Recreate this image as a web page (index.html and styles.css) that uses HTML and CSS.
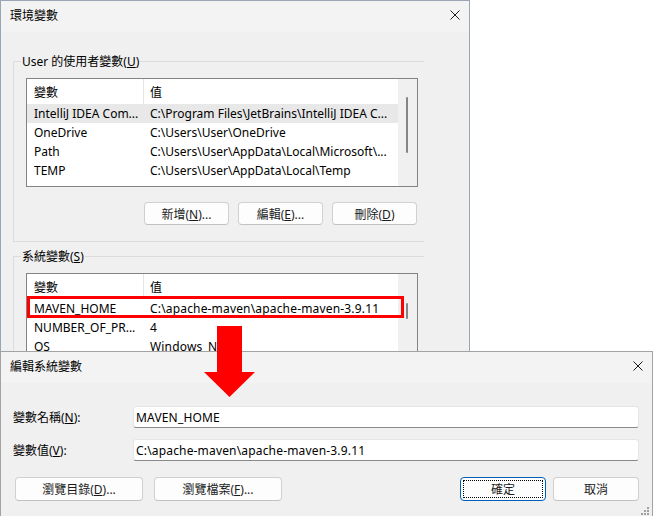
FILE: index.html
```html
<!DOCTYPE html>
<html lang="zh-Hant">
<head>
<meta charset="utf-8">
<title>環境變數</title>
<link rel="stylesheet" href="styles.css">
</head>
<body>
<main class="desk">
  <section class="win env">
    <header class="titlebar">
      <span class="title">環境變數</span>
      <svg class="close" width="10" height="10" viewBox="0 0 10 10"><path d="M0.5 0.5L9.5 9.5M9.5 0.5L0.5 9.5" stroke="#1b1b1b" stroke-width="1"/></svg>
    </header>
    <div class="env-body">
      <div class="group">
        <div class="group-title">User 的使用者變數(<u>U</u>)</div>
        <div class="listview lv-user">
          <div class="lv-main">
            <div class="lv-head"><span class="c1">變數</span><span class="c2">值</span></div>
            <div class="lv-row sel"><span class="c1">IntelliJ IDEA Com...</span><span class="c2">C:\Program Files\JetBrains\IntelliJ IDEA C...</span></div>
            <div class="lv-row"><span class="c1">OneDrive</span><span class="c2">C:\Users\User\OneDrive</span></div>
            <div class="lv-row"><span class="c1">Path</span><span class="c2">C:\Users\User\AppData\Local\Microsoft\...</span></div>
            <div class="lv-row"><span class="c1">TEMP</span><span class="c2">C:\Users\User\AppData\Local\Temp</span></div>
          </div>
          <div class="lv-scroll"><div class="thumb"></div></div>
        </div>
        <div class="btn-row">
          <button class="btn">新增(<u>N</u>)...</button>
          <button class="btn">編輯(<u>E</u>)...</button>
          <button class="btn">刪除(<u>D</u>)</button>
        </div>
      </div>
      <div class="group sys">
        <div class="group-title">系統變數(<u>S</u>)</div>
        <div class="listview lv-sys">
          <div class="lv-main">
            <div class="lv-head"><span class="c1">變數</span><span class="c2">值</span></div>
            <div class="lv-row"><span class="c1">MAVEN_HOME</span><span class="c2">C:\apache-maven\apache-maven-3.9.11</span></div>
            <div class="lv-row"><span class="c1">NUMBER_OF_PR...</span><span class="c2">4</span></div>
            <div class="lv-row"><span class="c1">OS</span><span class="c2">Windows_NT</span></div>
          </div>
          <div class="lv-scroll"><div class="thumb"></div></div>
          <div class="mark"></div>
        </div>
      </div>
    </div>
  </section>

  <section class="win edit">
    <header class="titlebar">
      <span class="title">編輯系統變數</span>
      <svg class="close" width="10" height="10" viewBox="0 0 10 10"><path d="M0.5 0.5L9.5 9.5M9.5 0.5L0.5 9.5" stroke="#1b1b1b" stroke-width="1"/></svg>
    </header>
    <div class="edit-body">
      <div class="field">
        <label class="field-label">變數名稱(<u>N</u>):</label>
        <div class="input">MAVEN_HOME</div>
      </div>
      <div class="field">
        <label class="field-label">變數值(<u>V</u>):</label>
        <div class="input">C:\apache-maven\apache-maven-3.9.11</div>
      </div>
      <div class="dlg-buttons">
        <div class="btn-group">
          <button class="btn wide">瀏覽目錄(<u>D</u>)...</button>
          <button class="btn wide">瀏覽檔案(<u>F</u>)...</button>
        </div>
        <div class="btn-group right">
          <button class="btn default">確定</button>
          <button class="btn">取消</button>
        </div>
      </div>
    </div>
    <svg class="grip" width="9" height="9" viewBox="0 0 9 9">
      <rect x="6" y="0" width="2" height="2" fill="#a0a0a0"/>
      <rect x="3" y="3" width="2" height="2" fill="#a0a0a0"/>
      <rect x="6" y="3" width="2" height="2" fill="#a0a0a0"/>
      <rect x="0" y="6" width="2" height="2" fill="#a0a0a0"/>
      <rect x="3" y="6" width="2" height="2" fill="#a0a0a0"/>
      <rect x="6" y="6" width="2" height="2" fill="#a0a0a0"/>
    </svg>
  </section>

  <svg class="arrow" width="51" height="72" viewBox="0 0 51 72">
    <polygon points="13,0 38,0 38,46 51,46 25.5,71 0,46 13,46" fill="#ff0000"/>
  </svg>
</main>
</body>
</html>
```

FILE: styles.css
```css
* { box-sizing: border-box; }
html, body { margin: 0; padding: 0; }
body {
  width: 653px;
  height: 516px;
  overflow: hidden;
  background: #ffffff;
  font-family: "Noto Sans", "Noto Sans CJK TC", sans-serif;
  font-size: 12px;
  color: #000;
}
u { text-decoration: underline; text-underline-offset: 1px; }

.desk { position: relative; width: 653px; height: 516px; }

.win {
  position: absolute;
  background: #f0f0f0;
  border: 1px solid #9ba6b5;
}
.env { left: 0; top: 0; width: 470px; height: 400px; z-index: 1; }
.edit { left: 0; top: 351px; width: 653px; height: 180px; border-color: #a3a3a3; z-index: 2; }

.titlebar {
  height: 31px;
  display: flex;
  align-items: center;
  justify-content: space-between;
  padding: 0 9px 3px 9px;
  background: #f3f3f3;
}
.close { display: block; }

/* environment window */
.env-body { padding: 29px 0 0 12px; }
.group {
  width: 411px;
  border: 1px solid #dcdcdc;
  border-right: 0;
  padding-bottom: 16px;
}
.group.sys { margin-top: 14px; height: 140px; }
.group-title {
  width: max-content;
  margin: -9px 0 0 7px;
  padding: 0 1px;
  line-height: 17px;
  background: #f0f0f0;
}

.listview {
  position: relative;
  display: flex;
  margin: 8px 0 0 12px;
  width: 392px;
  height: 109px;
  border: 1px solid #838383;
  background: #fff;
  overflow: hidden;
}
.lv-sys { height: 130px; }
.lv-main { flex: 1; min-width: 0; }
.lv-head { display: flex; height: 25px; }
.lv-head .c1 { border-right: 1px solid #e5e5e5; }
.lv-head span { display: flex; align-items: center; }
.lv-row { display: flex; align-items: center; height: 19px; }
.lv-row.sel { background: #e8e8e8; }
.c1 {
  flex: none;
  width: 117px;
  padding-left: 7px;
  white-space: nowrap;
  overflow: hidden;
}
.c2 {
  flex: 1;
  padding-left: 6px;
  white-space: nowrap;
  overflow: hidden;
}
.lv-sys .c2 { letter-spacing: 0.17px; }
.lv-scroll { flex: none; width: 19px; background: #f0f0f0; }
.thumb { width: 2px; margin-left: 8px; background: #858585; border-radius: 1px; }
.lv-user .thumb { margin-top: 18px; height: 56px; }
.lv-sys .thumb { margin-top: 29px; height: 16px; }

.mark {
  position: absolute;
  left: 0;
  top: 22px;
  width: 377px;
  height: 22px;
  border: 3px solid #ff0000;
}

.btn-row {
  display: flex;
  justify-content: flex-end;
  gap: 9px;
  margin: 15px 0 0 12px;
  width: 391px;
}
.btn {
  width: 85px;
  height: 23px;
  padding: 0;
  border: 1px solid #d0d0d0;
  border-bottom-color: #c2c2c2;
  border-radius: 4px;
  background: #fdfdfd;
  font: inherit;
  color: #1b1b1b;
  position: relative;
}

/* edit dialog */
.edit-body { padding: 23px 13px 0 12px; }
.field { display: flex; align-items: center; height: 22px; }
.field + .field { margin-top: 11px; }
.field-label { flex: none; width: 120px; }
.input {
  flex: 1;
  height: 22px;
  display: flex;
  align-items: center;
  padding-left: 2px;
  background: #fff;
  border: 1px solid #e5e5e5;
  border-bottom-color: #8a8a8a;
  border-radius: 3px;
  white-space: nowrap;
  letter-spacing: 0.17px;
}
.dlg-buttons {
  display: flex;
  justify-content: space-between;
  margin: 16px 0 0 2px;
}
.btn-group { display: flex; gap: 11px; }
.btn-group.right { gap: 7px; }
.dlg-buttons .btn { height: 24px; width: 86px; }
.dlg-buttons .btn.wide { width: 128px; }
.btn.default { border-color: #005fb8; }
.btn.default::after {
  content: "";
  position: absolute;
  inset: 2px;
  border: 1px dotted #000;
  border-radius: 1px;
}
.grip { position: absolute; left: 640px; top: 155px; }

.arrow { position: absolute; left: 204px; top: 326px; z-index: 3; }
```
